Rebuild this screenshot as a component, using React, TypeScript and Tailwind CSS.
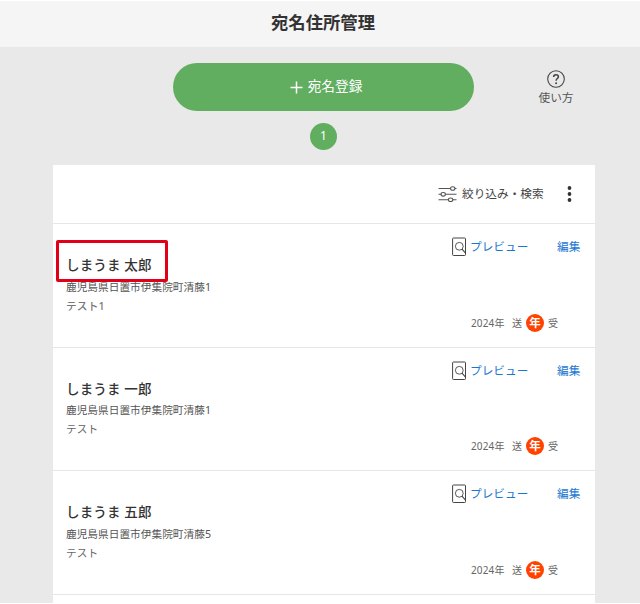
import React from "react";

type Address = { name: string; address: string; memo: string; height: string; inset: string; bold?: boolean; marked?: boolean };

const addresses: Address[] = [
  { name: "しまうま 太郎", address: "鹿児島県日置市伊集院町清藤1", memo: "テスト1", height: "h-[124px]", inset: "mt-[3px]", bold: true, marked: true },
  { name: "しまうま 一郎", address: "鹿児島県日置市伊集院町清藤1", memo: "テスト", height: "h-[123px]", inset: "mt-[2px]" },
  { name: "しまうま 五郎", address: "鹿児島県日置市伊集院町清藤5", memo: "テスト", height: "h-[124px]", inset: "mt-[3px]" },
];

function HelpIcon() {
  return (
    <svg width="18" height="18" viewBox="0 0 18 18" fill="none" stroke="#444">
      <circle cx="9" cy="9" r="8.3" strokeWidth="1.1" />
      <path d="M6.6 7.1c0-1.6 1-2.4 2.4-2.4s2.4.8 2.4 2.1c0 1.7-2.3 1.8-2.3 3.9" strokeWidth="1.5" />
      <circle cx="9.1" cy="13.2" r="1" fill="#444" stroke="none" />
    </svg>
  );
}

function FilterIcon() {
  return (
    <svg width="19" height="16" viewBox="0 0 19 16" fill="none" stroke="#555" strokeWidth="1.1">
      <path d="M.5 2.5h12M17 2.5h1.5M.5 8.3H3M7.5 8.3h11M.5 13.8h10M14.8 13.8h3.7" />
      <ellipse cx="14.7" cy="2.5" rx="2.2" ry="1.8" />
      <ellipse cx="5.2" cy="8.3" rx="2.2" ry="1.8" />
      <ellipse cx="12.6" cy="13.8" rx="2.2" ry="1.8" />
    </svg>
  );
}

function PreviewIcon() {
  return (
    <svg width="14" height="19" viewBox="0 0 14 19" fill="none" stroke="#444">
      <rect x=".6" y="1" width="12.9" height="17.5" rx=".8" strokeWidth="1" />
      <circle cx="7.3" cy="9.3" r="3.9" strokeWidth=".9" />
      <path d="M10 12.1l3.3 3.7" strokeWidth="1.1" />
    </svg>
  );
}

function AddressRow({ item }: { item: Address }) {
  return (
    <li className={`relative flex justify-between border-b border-[#e6e6e6] ${item.height}`}>
      <div className="pt-[31px] pl-[13px]">
        <h2 className="h-5 text-[13.5px] leading-5 font-medium tracking-[0.15px] text-[#333]">{item.name}</h2>
        <p className={`h-[18px] text-[10.67px] leading-[18px] tracking-[0.03px] text-[#555] ${item.inset}`}>{item.address}</p>
        <p className={`mt-px h-[18px] text-[10.67px] leading-[18px] ${item.bold ? "font-medium tracking-[0.2px] text-[#777]" : "tracking-[0.05px] text-[#666]"}`}>{item.memo}</p>
      </div>
      <div className="flex w-[143px] flex-col">
        <div className="mt-[13px] flex h-5 text-[11.67px] leading-5 text-[#1976d2]">
          <a className="flex w-[105px] gap-1">
            <PreviewIcon />
            <span>プレビュー</span>
          </a>
          <a>編集</a>
        </div>
        <div className={`flex h-[18px] items-center pl-[19px] text-[10px] leading-[18px] text-[#666] ${item.height === "h-[123px]" ? "mt-[56px]" : "mt-[57px]"}`}>
          <span className="w-[41px] tracking-[0.15px]">2024年</span>
          <span className="w-[14px]">送</span>
          <span className="flex h-[18px] w-[18px] items-center justify-center rounded-full bg-[#ff4200] text-[11.5px] leading-[18px] font-bold text-white">年</span>
          <span className="ml-1">受</span>
        </div>
      </div>
      {item.marked && <div className="absolute top-4 left-[3px] h-[42px] w-[112px] rounded-[2px] border-3 border-[#e10017]" />}
    </li>
  );
}

export default function App() {
  return (
    <div className="h-[604px] w-[640px] overflow-hidden border-y border-white bg-[#e9e9e9] font-['Noto_Sans','Noto_Sans_CJK_JP',sans-serif]">
      <header className="flex h-[46px] items-center justify-center bg-[#f5f5f5] pb-1 pl-[6px]">
        <h1 className="text-[17.33px] leading-6 font-bold text-[#333]">宛名住所管理</h1>
      </header>
      <div className="flex pt-4 pl-[173px]">
        <button className="flex h-12 w-[301px] items-center justify-center rounded-[24px] bg-[#61ae60] pl-[5px] text-[13.67px] text-white">
          <svg width="13" height="13" viewBox="0 0 13 13" stroke="#fff" strokeWidth="1.5" className="mr-[5px]">
            <path d="M.5 6.5h12M6.5 .5v12" />
          </svg>
          <span className="-mt-[2px]">宛名登録</span>
        </button>
        <div className="ml-[64px] flex w-9 flex-col items-center pt-[7px]">
          <HelpIcon />
          <span className="mt-px h-[18px] text-[11.67px] leading-[18px] whitespace-nowrap text-[#555]">使い方</span>
        </div>
      </div>
      <div className="mt-3 ml-[310px] flex h-[27px] w-[27px] items-center justify-center rounded-full bg-[#61ae60] pb-px text-[12px] text-white">1</div>
      <main className="mt-[15px] ml-[53px] h-[440px] w-[542px] bg-white">
        <div className="flex h-[59px] items-center border-b border-[#e6e6e6] pl-[385px]">
          <FilterIcon />
          <span className="ml-[5px] w-[105px] text-[11.67px] leading-5 whitespace-nowrap text-[#444]">絞り込み・検索</span>
          <svg width="6" height="18" viewBox="0 0 6 18" fill="#333">
            <circle cx="2.5" cy="3" r="1.9" />
            <circle cx="2.5" cy="9" r="1.9" />
            <circle cx="2.5" cy="15" r="1.9" />
          </svg>
        </div>
        <ul>
          {addresses.map((item) => (
            <AddressRow key={item.name} item={item} />
          ))}
        </ul>
      </main>
    </div>
  );
}
